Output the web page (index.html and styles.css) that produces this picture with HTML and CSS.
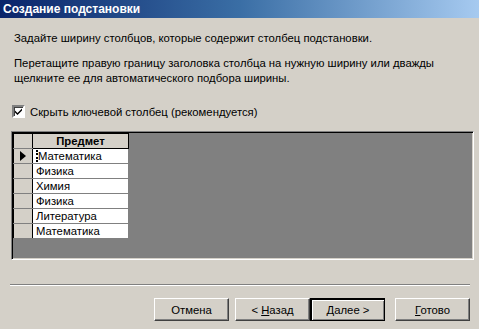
FILE: index.html
```html
<!DOCTYPE html>
<html lang="ru">
<head>
    <meta charset="UTF-8">
    <title>Создание подстановки</title>
    <link rel="stylesheet" href="styles.css">
</head>
<body>
    <div class="dialog">
        <div class="titlebar">Создание подстановки</div>
        <div class="content">
            <p class="line first">Задайте ширину столбцов, которые содержит столбец подстановки.</p>
            <p class="line gap">Перетащите правую границу заголовка столбца на нужную ширину или дважды</p>
            <p class="line">щелкните ее для автоматического подбора ширины.</p>

            <label class="check">
                <span class="box">
                    <svg width="9" height="9" viewBox="0 0 9 9"><path d="M1 3.5 L3.5 6 L8 1.5 L8 3.5 L3.5 8 L1 5.5 Z" fill="#000"/></svg>
                </span>
                Скрыть ключевой столбец (рекомендуется)
            </label>

            <div class="grid">
                <table class="sheet">
                    <tr class="head">
                        <td class="sel"></td>
                        <td class="col">Предмет</td>
                    </tr>
                    <tr>
                        <td class="sel current"><span class="arrow"></span></td>
                        <td class="cell"><span class="caret"></span>Математика</td>
                    </tr>
                    <tr><td class="sel"></td><td class="cell">Физика</td></tr>
                    <tr><td class="sel"></td><td class="cell">Химия</td></tr>
                    <tr><td class="sel"></td><td class="cell">Физика</td></tr>
                    <tr><td class="sel"></td><td class="cell">Литература</td></tr>
                    <tr><td class="sel"></td><td class="cell">Математика</td></tr>
                </table>
            </div>
        </div>

        <div class="separator"></div>

        <div class="buttons">
            <button class="btn cancel">Отмена</button>
            <button class="btn back">&lt; <u>Н</u>азад</button>
            <button class="btn next default"><u>Д</u>алее &gt;</button>
            <button class="btn finish"><u>Г</u>отово</button>
        </div>
    </div>
</body>
</html>
```

FILE: styles.css
```css
:root {
    --face: #d4d0c8;
    --shadow: #808080;
    --dark: #404040;
    --light: #ffffff;
}

body {
    margin: 0;
    background-color: var(--face);
    font-family: 'Liberation Sans', Arial, sans-serif;
    font-size: 11.3px;
    color: #000000;
}

.dialog {
    width: 479px;
    height: 329px;
    overflow: hidden;
}

.titlebar {
    height: 18px;
    line-height: 18px;
    padding-left: 3px;
    background: linear-gradient(to right, #0a246a, #3a6ea5 50%, #a6caf0);
    color: #ffffff;
    font-weight: bold;
    font-size: 12px;
}

.content {
    padding: 0 0 0 14px;
}

.line {
    margin: 0;
    line-height: 15px;
    white-space: nowrap;
}

.line.first {
    margin-top: 13px;
}

.line.gap {
    margin-top: 10px;
}

.check {
    display: flex;
    align-items: center;
    gap: 5px;
    margin-top: 18px;
    margin-left: -2px;
    height: 15px;
}

.box {
    width: 9px;
    height: 9px;
    padding: 0;
    background-color: #ffffff;
    border-top: 2px solid var(--shadow);
    border-left: 2px solid var(--shadow);
    border-right: 2px solid var(--light);
    border-bottom: 2px solid var(--light);
    box-shadow: inset 1px 1px 0 var(--dark);
    display: flex;
}

.grid {
    margin-top: 12px;
    margin-left: -3px;
    width: 463px;
    height: 129px;
    box-sizing: border-box;
    background-color: var(--shadow);
    border-top: 1px solid var(--shadow);
    border-left: 1px solid var(--shadow);
    border-right: 1px solid var(--light);
    border-bottom: 1px solid var(--light);
    box-shadow: inset 1px 1px 0 #000000, inset -1px -1px 0 var(--face);
    padding: 1px;
}

.sheet {
    border-collapse: collapse;
}

.sheet td {
    height: 14px;
    padding: 0;
    border: 1px solid var(--shadow);
    line-height: 14px;
    white-space: nowrap;
}

.sheet .sel {
    width: 18px;
    background-color: var(--face);
    border-top: 1px solid var(--light);
    border-left: 1px solid #000000;
    border-right: 1px solid #000000;
    border-bottom: 1px solid var(--shadow);
    position: relative;
}

.sheet .head td {
    border-top: 1px solid #000000;
}

.sheet .col {
    width: 95px;
    background-color: var(--face);
    font-weight: bold;
    text-align: center;
    border-right: 1px solid #000000;
    border-bottom: 1px solid #000000;
}

.sheet .cell {
    background-color: #ffffff;
    padding-left: 3px;
    width: 92px;
}

.arrow {
    position: absolute;
    left: 6px;
    top: 2px;
    width: 0;
    height: 0;
    border-top: 5px solid transparent;
    border-bottom: 5px solid transparent;
    border-left: 6px solid #000000;
}

.caret {
    display: inline-block;
    width: 1px;
    height: 12px;
    margin-right: -1px;
    vertical-align: -2px;
    border-left: 2px dotted #000000;
}

.separator {
    margin: 24px 9px 0 10px;
    height: 0;
    border-top: 1px solid var(--shadow);
    border-bottom: 1px solid var(--light);
}

.buttons {
    display: flex;
    justify-content: flex-end;
    padding-right: 9px;
    margin-top: 12px;
}

.btn {
    width: 75px;
    height: 23px;
    box-sizing: border-box;
    padding: 0;
    font-family: inherit;
    font-size: 11.3px;
    color: #000000;
    background-color: var(--face);
    border-top: 1px solid var(--light);
    border-left: 1px solid var(--light);
    border-right: 1px solid var(--dark);
    border-bottom: 1px solid var(--dark);
    box-shadow: inset -1px -1px 0 var(--shadow);
}

.btn u {
    text-decoration: underline;
}

.cancel {
    margin-right: 6px;
}

.next {
    margin-right: 10px;
}

.default {
    outline: 1px solid #000000;
    outline-offset: -1px;
    border-top: 2px solid #000000;
    border-left: 2px solid #000000;
    box-shadow: inset 1px 1px 0 var(--light), inset -1px -1px 0 var(--shadow);
}
```
